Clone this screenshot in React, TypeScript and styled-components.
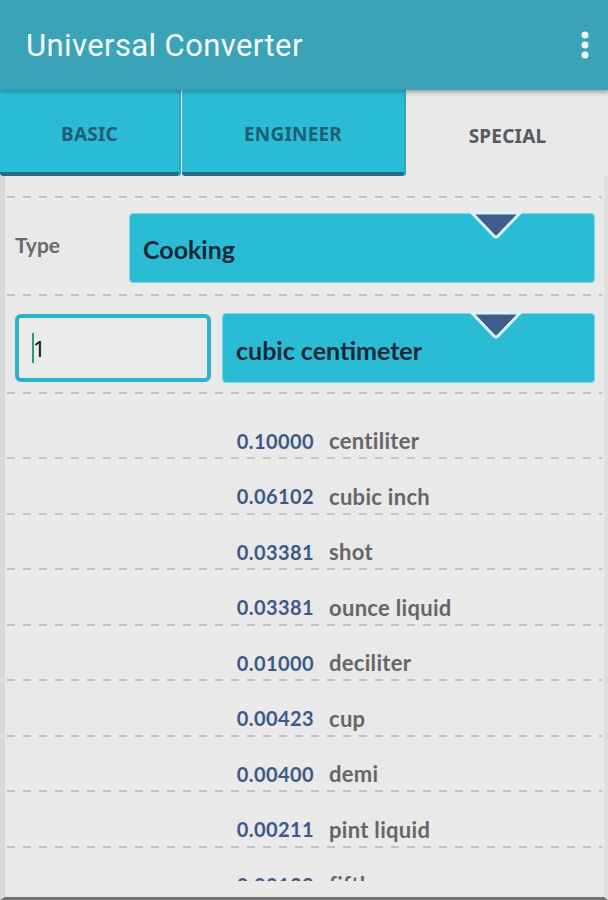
import React from 'react';
import styled, { createGlobalStyle } from 'styled-components';

const GlobalStyle = createGlobalStyle`
  html, body {
    margin: 0;
    padding: 0;
    background: #dcdcdc;
  }
  * { box-sizing: border-box; }
`;

const Page = styled.div`
  width: 608px;
  height: 900px;
  display: flex;
  flex-direction: column;
  overflow: hidden;
  font-family: Lato, "Noto Sans", sans-serif;
`;

const AppBar = styled.header`
  height: 90px;
  flex: none;
  display: flex;
  align-items: center;
  padding: 0 26px;
  background: #3aa3b8;
  position: relative;
  z-index: 2;
  box-shadow: 0 2px 4px rgba(0, 0, 0, 0.25);
`;

const AppTitle = styled.h1`
  margin: 0;
  font-family: Roboto, "Liberation Sans", sans-serif;
  font-weight: 400;
  font-size: 31px;
  color: #f4fbfc;
  letter-spacing: 0.4px;
`;

const MenuButton = styled.button`
  margin-left: auto;
  margin-right: -8px;
  border: none;
  background: none;
  padding: 0;
  display: flex;
`;

const TabBar = styled.nav`
  height: 86px;
  flex: none;
  display: grid;
  grid-template-columns: 179px 222px 1fr;
  column-gap: 3px;
  background: #e9e9e9;
`;

const Tab = styled.div<{ $active?: boolean }>`
  display: flex;
  align-items: center;
  justify-content: center;
  padding-top: 6px;
  font-family: "Noto Sans", Lato, sans-serif;
  font-weight: 700;
  font-size: 19px;
  letter-spacing: 0.2px;
  color: ${p => (p.$active ? '#555b5e' : '#1f5e74')};
  background: ${p => (p.$active ? '#e9e9e9' : '#2bbcd5')};
  border-bottom: ${p => (p.$active ? 'none' : '4px solid #2b6a85')};
  border-radius: 0 0 3px 3px;
  box-shadow: ${p => (p.$active ? 'inset 0 6px 6px -4px rgba(0,0,0,0.12)' : '2px 0 0 #2aa8c0')};
`;

const Panel = styled.main`
  flex: 1;
  display: flex;
  flex-direction: column;
  background: #e9e9e9;
  border-left: 5px solid #dadada;
  border-right: 4px solid #dedede;
  border-bottom: 3px solid #707070;
  padding: 20px 2px 16px 2px;
  min-height: 0;
`;

const Dashed = styled.div`
  height: 2px;
  flex: none;
  background: repeating-linear-gradient(90deg, #c2c2c2 0 8px, transparent 8px 16px);
`;

const TypeRow = styled.div`
  height: 96px;
  display: flex;
  align-items: center;
  padding: 3px 7px 0 8px;
`;

const TypeLabel = styled.span`
  width: 114px;
  flex: none;
  font-weight: 700;
  font-size: 21px;
  color: #6a6a6a;
  padding-bottom: 6px;
`;

const Select = styled.div<{ $height: number }>`
  position: relative;
  flex: 1;
  height: ${p => p.$height}px;
  display: flex;
  align-items: center;
  padding: 3px 13px 0;
  background: #2bbcd5;
  border: 1px solid #7fd6e6;
  border-radius: 4px;
  font-weight: 700;
  font-size: 25px;
  color: #15283a;
`;

const Caret = styled.svg`
  position: absolute;
  top: -3px;
  right: 71px;
`;

const UnitRow = styled.div`
  height: 96px;
  display: flex;
  align-items: center;
  gap: 11px;
  padding: 8px 7px 0 8px;
`;

const NumberInput = styled.div`
  width: 196px;
  height: 68px;
  flex: none;
  display: flex;
  align-items: center;
  padding-left: 13px;
  border: 4px solid #2cb2c9;
  border-radius: 6px;
  background: #ebebeb;
  font-family: "Noto Sans", sans-serif;
  font-size: 22px;
  color: #111;
`;

const Cursor = styled.span`
  width: 2px;
  height: 30px;
  background: #2a9a78;
  margin-right: -1px;
`;

const ResultList = styled.div`
  flex: 1;
  min-height: 0;
  overflow: hidden;
  padding-top: 9.5px;
`;

const ResultRow = styled.div`
  height: 55.5px;
  display: flex;
  flex-direction: column;
  justify-content: flex-end;
`;

const ResultLine = styled.div`
  display: grid;
  grid-template-columns: 307px 1fr;
  column-gap: 15px;
  align-items: center;
  height: 24px;
  margin-bottom: 6px;
`;

const Amount = styled.span`
  text-align: right;
  font-weight: 700;
  font-size: 20px;
  letter-spacing: 0.4px;
  color: #3b5a85;
`;

const UnitName = styled.span`
  font-weight: 700;
  font-size: 22px;
  letter-spacing: 0.3px;
  color: #666666;
`;

const results = [
  ['0.10000', 'centiliter'],
  ['0.06102', 'cubic inch'],
  ['0.03381', 'shot'],
  ['0.03381', 'ounce liquid'],
  ['0.01000', 'deciliter'],
  ['0.00423', 'cup'],
  ['0.00400', 'demi'],
  ['0.00211', 'pint liquid'],
  ['0.00132', 'fifth'],
];

const CaretIcon = () => (
  <Caret width="54" height="30" viewBox="0 0 54 30">
    <path d="M3 2 L51 2 L29 25 Q27 27 25 25 Z" fill="#3e5d8c" stroke="#d9f4f8" strokeWidth="3" strokeLinejoin="round" />
  </Caret>
);

const App = () => (
  <Page>
    <GlobalStyle />
    <AppBar>
      <AppTitle>Universal Converter</AppTitle>
      <MenuButton aria-label="More options">
        <svg width="10" height="30" viewBox="0 0 10 30">
          <circle cx="5" cy="5" r="3.5" fill="#eefafc" />
          <circle cx="5" cy="15" r="3.5" fill="#eefafc" />
          <circle cx="5" cy="25" r="3.5" fill="#eefafc" />
        </svg>
      </MenuButton>
    </AppBar>
    <TabBar>
      <Tab>BASIC</Tab>
      <Tab>ENGINEER</Tab>
      <Tab $active>SPECIAL</Tab>
    </TabBar>
    <Panel>
      <Dashed />
      <TypeRow>
        <TypeLabel>Type</TypeLabel>
        <Select $height={70}>
          Cooking
          <CaretIcon />
        </Select>
      </TypeRow>
      <Dashed />
      <UnitRow>
        <NumberInput>
          <Cursor />1
        </NumberInput>
        <Select $height={70}>
          cubic centimeter
          <CaretIcon />
        </Select>
      </UnitRow>
      <Dashed />
      <ResultList>
        {results.map(([value, name], i) => (
          <ResultRow key={i}>
            <ResultLine>
              <Amount>{value}</Amount>
              <UnitName>{name}</UnitName>
            </ResultLine>
            <Dashed />
          </ResultRow>
        ))}
      </ResultList>
    </Panel>
  </Page>
);

export default App;
